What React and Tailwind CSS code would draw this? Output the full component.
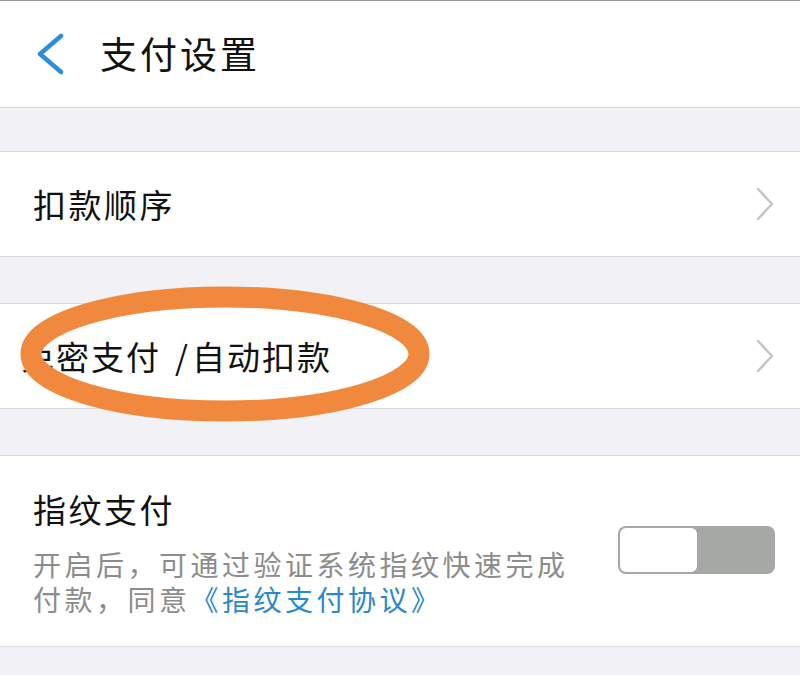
import React from "react";

function Chevron() {
  return (
    <svg width="20" height="34" viewBox="0 0 20 34" className="mr-[25px]">
      <polyline points="3,2 17,17 3,32" fill="none" stroke="#c4c4c8" strokeWidth="2.5" strokeLinecap="round" strokeLinejoin="round" />
    </svg>
  );
}

export default function App() {
  return (
    <div
      className="relative w-[800px] h-[675px] overflow-hidden bg-[#f2f2f6] text-[#111]"
      style={{ fontFamily: '"Noto Sans CJK SC", "Noto Sans", sans-serif' }}
    >
      {/* Header */}
      <div className="h-[108px] bg-white border-t border-t-[#9a9a9a] border-b border-b-[#d6d6da] flex items-center">
        <svg width="30" height="42" viewBox="0 0 30 42" className="ml-[35px]">
          <polyline points="26,3 5,21 26,39" fill="none" stroke="#2c8fd9" strokeWidth="4.5" strokeLinecap="round" strokeLinejoin="round" />
        </svg>
        <div className="ml-[35px] text-[37px] leading-none tracking-[3px] -mt-[2px]">支付设置</div>
      </div>

      <div className="h-[43px]" />

      {/* Row 1 */}
      <div className="h-[106px] bg-white border-y border-[#dcdce0] flex items-center justify-between">
        <div className="pl-[33px] text-[33px] leading-none tracking-[2.5px]">扣款顺序</div>
        <Chevron />
      </div>

      <div className="h-[46px]" />

      {/* Row 2 */}
      <div className="h-[106px] bg-white border-y border-[#dcdce0] flex items-center justify-between">
        <div className="pl-[21px] text-[33px] leading-none tracking-[2px]">
          免密支付<span className="ml-[14px] mr-[2px]">/</span>自动扣款
        </div>
        <Chevron />
      </div>

      <div className="h-[46px]" />

      {/* Row 3 */}
      <div className="h-[192px] bg-white border-y border-[#dcdce0] flex items-center justify-between">
        <div className="pl-[33px] pt-[4px]">
          <div className="text-[33px] leading-[40px] tracking-[2.5px]">指纹支付</div>
          <div className="mt-[18px] text-[28px] leading-[35px] tracking-[3.5px] text-[#8c8c8c]">
            <div>开启后，可通过验证系统指纹快速完成</div>
            <div className="flex">
              <span>付款，同意</span>
              <span className="text-[#2a88cc]">《指纹支付协议》</span>
            </div>
          </div>
        </div>
        <div className="mr-[25px] mt-[-2px] w-[157px] h-[48px] rounded-[8px] bg-[#a6a8a6] p-[2px]">
          <div className="w-[77px] h-full rounded-[6px] bg-white" />
        </div>
      </div>

      {/* Annotation ellipse */}
      <svg className="absolute left-0 top-0 pointer-events-none" width="800" height="675" viewBox="0 0 800 675">
        <ellipse cx="225" cy="354" rx="194" ry="57" fill="none" stroke="#f0893d" strokeWidth="21" />
      </svg>
    </div>
  );
}
